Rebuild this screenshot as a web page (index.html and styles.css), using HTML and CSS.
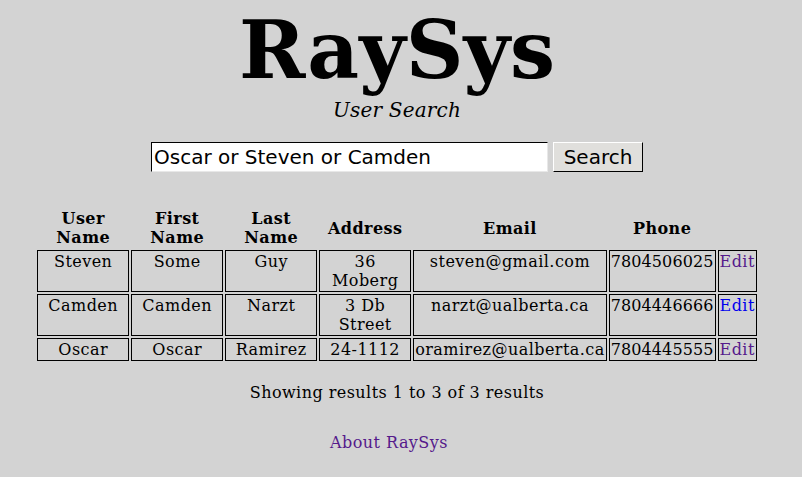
FILE: index.html
```html
<!DOCTYPE html>
<html>
<head>
<meta charset="utf-8">
<title>RaySys</title>
<link rel="stylesheet" href="styles.css">
</head>
<body>
<div class="page">
  <header class="masthead">
    <h1 class="logo">RaySys</h1>
    <p class="subtitle">User Search</p>
  </header>
  <form class="search">
    <input class="search-input" type="text" value="Oscar or Steven or Camden">
    <button class="search-btn" type="button">Search</button>
  </form>
  <table class="results">
    <thead>
      <tr>
        <th class="c-user">User Name</th>
        <th class="c-first">First Name</th>
        <th class="c-last">Last Name</th>
        <th class="c-addr">Address</th>
        <th>Email</th>
        <th>Phone</th>
        <th></th>
      </tr>
    </thead>
    <tbody>
      <tr>
        <td>Steven</td><td>Some</td><td>Guy</td><td>36 Moberg</td>
        <td>steven@gmail.com</td><td class="num">7804506025</td><td><a class="visited" href="#">Edit</a></td>
      </tr>
      <tr>
        <td>Camden</td><td>Camden</td><td>Narzt</td><td>3 Db Street</td>
        <td>narzt@ualberta.ca</td><td class="num">7804446666</td><td><a class="fresh" href="#">Edit</a></td>
      </tr>
      <tr>
        <td>Oscar</td><td>Oscar</td><td>Ramirez</td><td>24-1112</td>
        <td>oramirez@ualberta.ca</td><td class="num">7804445555</td><td><a class="visited" href="#">Edit</a></td>
      </tr>
    </tbody>
  </table>
  <p class="summary">Showing results 1 to 3 of 3 results</p>
  <p class="about"><a class="visited" href="#">About RaySys</a></p>
</div>
</body>
</html>
```
FILE: styles.css
```css
html, body {
  margin: 0;
  padding: 0;
  background: #d3d3d3;
}
body {
  font-family: "DejaVu Serif", serif;
  font-size: 16px;
  letter-spacing: 0.45px;
  color: #000;
}
.page {
  padding: 4px 8px 0 0;
  text-align: center;
}
.masthead {
  display: flex;
  flex-direction: column;
  align-items: center;
}
.logo {
  margin: 0;
  font-size: 80px;
  line-height: 93px;
  font-weight: bold;
  letter-spacing: 0;
}
.subtitle {
  margin: 2px 0 0 0;
  font-size: 20px;
  line-height: 23px;
  font-style: italic;
  letter-spacing: 0.2px;
}
.search {
  display: flex;
  justify-content: center;
  gap: 5px;
  margin-top: 20px;
}
.search-input {
  box-sizing: border-box;
  width: 397px;
  height: 30px;
  margin: 0;
  padding: 0 2px;
  font-family: "DejaVu Sans", sans-serif;
  font-size: 20px;
  letter-spacing: 0;
  color: #000;
  background: #fff;
  border: 1px solid;
  border-color: #000 #e8e8e8 #e8e8e8 #000;
  outline: none;
}
.search-btn {
  box-sizing: border-box;
  width: 90px;
  height: 30px;
  margin: 0;
  padding: 0;
  font-family: "DejaVu Sans", sans-serif;
  font-size: 20px;
  letter-spacing: 0;
  color: #000;
  background: #e0dfdc;
  border: 1px solid;
  border-color: #fff #000 #000 #fff;
}
.results {
  margin: 34px auto 0 auto;
  border-collapse: separate;
  border-spacing: 2px;
}
.results th {
  padding: 1px;
  font-weight: bold;
  line-height: 19px;
  vertical-align: middle;
}
.results td {
  padding: 1px;
  border: 1px solid #000;
  line-height: 19px;
  vertical-align: top;
}
.results td.num {
  letter-spacing: 0.1px;
}
.c-user, .c-first, .c-last, .c-addr {
  width: 90px;
}
.summary {
  margin: 20px 0 0 0;
  line-height: 19px;
}
.about {
  margin: 31px 0 0 0;
  padding-right: 16px;
  line-height: 19px;
}
a {
  text-decoration: none;
}
a.visited {
  color: #551a8b;
}
a.fresh {
  color: #0000ee;
}
```
